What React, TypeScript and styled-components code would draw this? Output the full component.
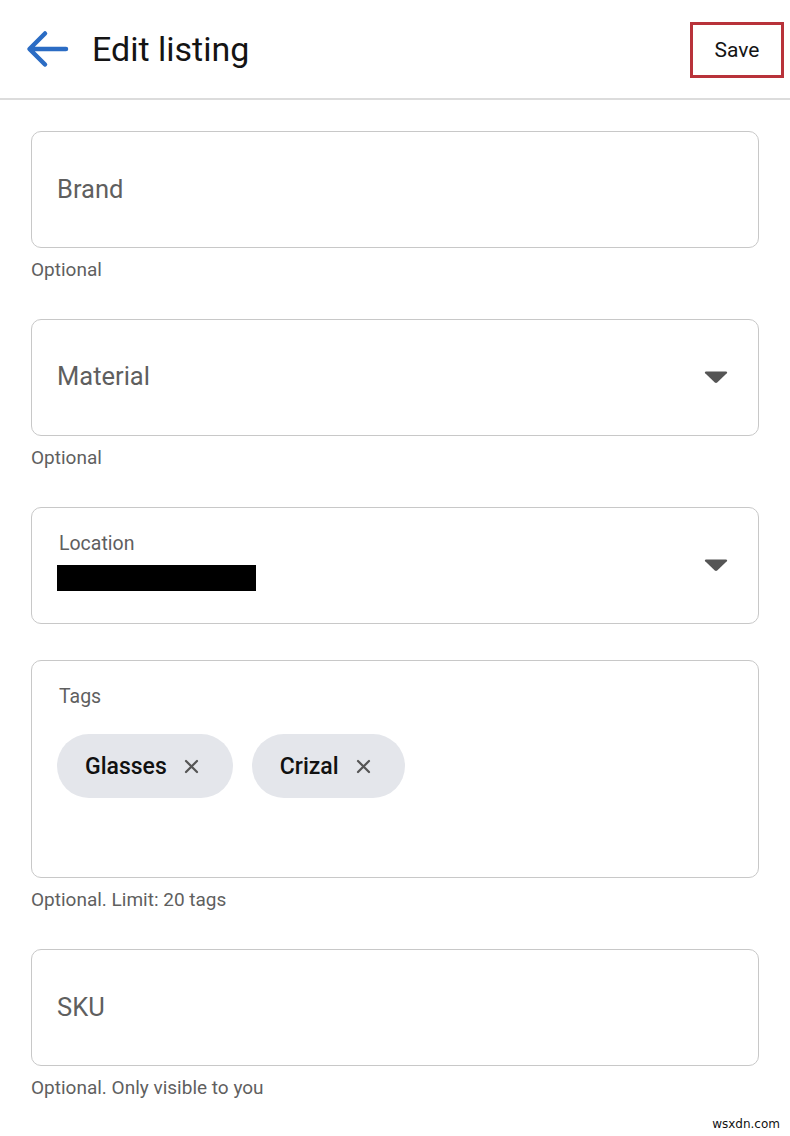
import React from "react";
import styled, { createGlobalStyle } from "styled-components";

const GlobalStyle = createGlobalStyle`
  html, body {
    margin: 0;
    padding: 0;
    background: #fff;
    font-family: Roboto, "Noto Sans", sans-serif;
  }
`;

const Page = styled.div`
  position: relative;
  min-height: 1136px;
  width: 790px;
  background: #fff;
`;

const Header = styled.header`
  display: flex;
  align-items: center;
  height: 100px;
  padding: 0 6px 0 24px;
  border-bottom: 2px solid #dcdcdc;
  box-sizing: border-box;
`;

const BackButton = styled.button`
  display: flex;
  align-items: center;
  justify-content: center;
  width: 46px;
  height: 46px;
  padding: 0;
  border: none;
  background: none;
`;

const Title = styled.h1`
  flex: 1;
  margin: 0 0 0 22px;
  font-size: 34px;
  font-weight: 400;
  color: #141414;
`;

const SaveButton = styled.button`
  width: 94px;
  height: 56px;
  border: 3px solid #b8323a;
  background: #fff;
  font-family: Roboto, sans-serif;
  font-size: 21px;
  color: #141414;
  box-sizing: border-box;
  margin-top: 2px;
`;

const Form = styled.main`
  display: flex;
  flex-direction: column;
  gap: 36.8px;
  padding: 31px 31px 0 31px;
`;

const FieldGroup = styled.div`
  display: flex;
  flex-direction: column;
`;

const Box = styled.div<{ $tall?: boolean }>`
  display: flex;
  align-items: ${(p) => (p.$tall ? "flex-start" : "center")};
  height: ${(p) => (p.$tall ? "218px" : "117px")};
  padding: 0 30px 0 25px;
  border: 1.5px solid #c8c8c8;
  border-radius: 10px;
  box-sizing: border-box;
`;

const BoxBody = styled.div<{ $top?: number; $bottom?: number }>`
  flex: 1;
  display: flex;
  flex-direction: column;
  padding-top: ${(p) => p.$top ?? 0}px;
  padding-bottom: ${(p) => p.$bottom ?? 0}px;
`;

const Placeholder = styled.span`
  font-size: 25.5px;
  color: #5f5f5f;
  margin-top: -2px;
`;

const Label = styled.span`
  font-size: 19.5px;
  color: #5f5f5f;
  margin-left: 2px;
`;

const Redacted = styled.div`
  width: 199px;
  height: 26px;
  background: #000;
  margin-top: 10px;
`;

const Helper = styled.div`
  margin-top: 10px;
  font-size: 19px;
  line-height: 24px;
  color: #5f5f5f;
`;

const ChipRow = styled.div`
  display: flex;
  gap: 19px;
  margin-top: 26px;
`;

const Chip = styled.div`
  display: flex;
  align-items: center;
  gap: 17px;
  height: 64px;
  padding: 0 34px 0 28px;
  border-radius: 32px;
  background: #e4e6eb;
  font-size: 23px;
  font-weight: 500;
  color: #111;
`;

const Watermark = styled.span`
  position: absolute;
  right: 10px;
  bottom: 5px;
  font-family: "DejaVu Sans", sans-serif;
  font-size: 12px;
  color: #111;
`;

const BackArrow = () => (
  <svg width="44" height="40" viewBox="0 0 44 40">
    <path
      d="M41 20H5M20 4.5L4.5 20 20 35.5"
      fill="none"
      stroke="#2b6cc4"
      strokeWidth="4.5"
      strokeLinecap="round"
      strokeLinejoin="round"
    />
  </svg>
);

const Caret = () => (
  <svg width="24" height="14" viewBox="0 0 24 14">
    <path d="M2 1.5h20c1 0 1.5 1 .8 1.8l-9.6 9.2c-.7.6-1.7.6-2.4 0L1.2 3.3C.5 2.5 1 1.5 2 1.5z" fill="#555" />
  </svg>
);

const Close = () => (
  <svg width="15" height="15" viewBox="0 0 15 15">
    <path d="M2 2l11 11M13 2L2 13" stroke="#555" strokeWidth="2.2" strokeLinecap="round" />
  </svg>
);

export default function App() {
  return (
    <Page>
      <GlobalStyle />
      <Header>
        <BackButton>
          <BackArrow />
        </BackButton>
        <Title>Edit listing</Title>
        <SaveButton>Save</SaveButton>
      </Header>
      <Form>
        <FieldGroup>
          <Box>
            <Placeholder>Brand</Placeholder>
          </Box>
          <Helper>Optional</Helper>
        </FieldGroup>
        <FieldGroup>
          <Box>
            <BoxBody>
              <Placeholder>Material</Placeholder>
            </BoxBody>
            <Caret />
          </Box>
          <Helper>Optional</Helper>
        </FieldGroup>
        <FieldGroup>
          <Box>
            <BoxBody $bottom={8}>
              <Label>Location</Label>
              <Redacted />
            </BoxBody>
            <Caret />
          </Box>
        </FieldGroup>
        <FieldGroup>
          <Box $tall>
            <BoxBody $top={24}>
              <Label>Tags</Label>
              <ChipRow>
                <Chip>
                  Glasses
                  <Close />
                </Chip>
                <Chip>
                  Crizal
                  <Close />
                </Chip>
              </ChipRow>
            </BoxBody>
          </Box>
          <Helper>Optional. Limit: 20 tags</Helper>
        </FieldGroup>
        <FieldGroup>
          <Box>
            <Placeholder>SKU</Placeholder>
          </Box>
          <Helper>Optional. Only visible to you</Helper>
        </FieldGroup>
      </Form>
      <Watermark>wsxdn.com</Watermark>
    </Page>
  );
}
